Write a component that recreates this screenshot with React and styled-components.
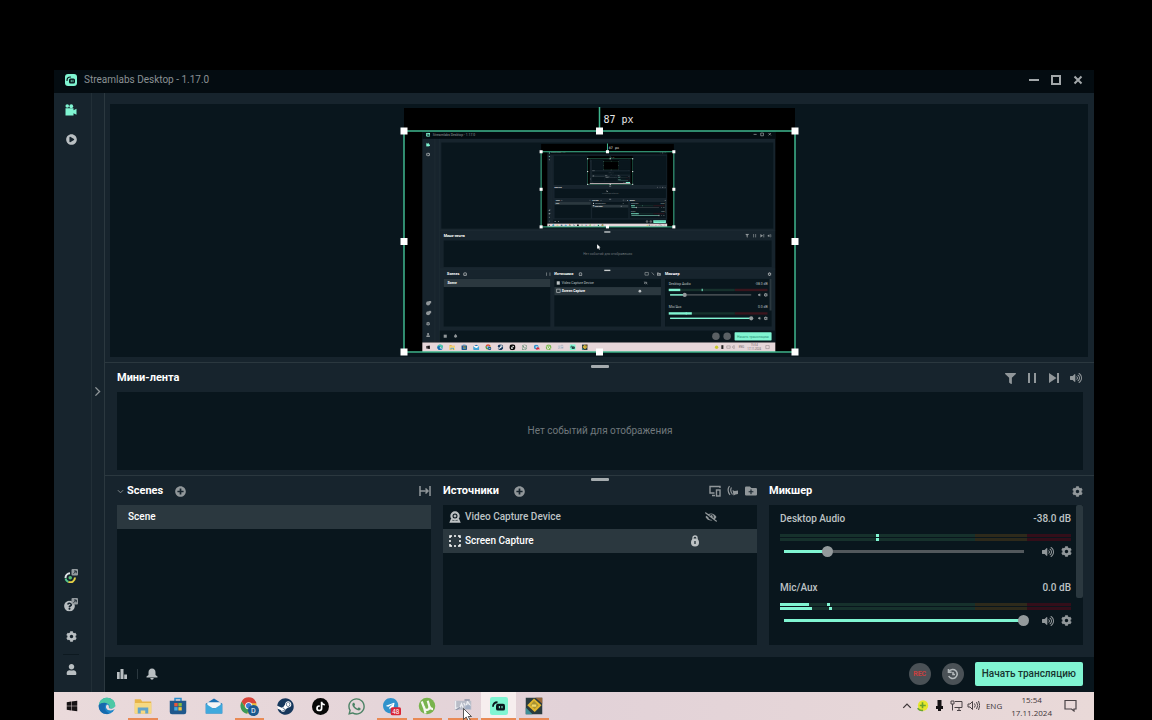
import React from 'react';
import styled, { createGlobalStyle } from 'styled-components';
import {
  FaCog,
  FaUser,
  FaBell,
  FaPlusCircle,
  FaFilter,
  FaVolumeUp,
  FaVolumeDown,
  FaFolderPlus,
  FaEyeSlash,
  FaPlayCircle,
  FaWindows,
  FaSteam,
  FaTiktok,
  FaWhatsapp,
  FaTelegram,
  FaQuestionCircle,
} from 'react-icons/fa';

const colors = {
  accent: '#80f5d2',
  section: '#17242d',
  panel: '#09161d',
  title: '#040c11',
  border: '#2b383f',
  icon: '#91979a',
  line: '#3fb68e',
};

const GlobalStyle = createGlobalStyle`
  * {
    box-sizing: border-box;
  }
  body {
    margin: 0;
    background: #000;
    color: #bdc2c4;
    font-family: Roboto, "Noto Sans", sans-serif;
    font-size: 10px;
    line-height: 14px;
  }
  button {
    display: inline-flex;
    align-items: center;
    justify-content: center;
    border: 0;
    padding: 0;
    background: none;
    color: inherit;
    font: inherit;
    cursor: pointer;
  }
  svg {
    display: block;
    flex: none;
  }
`;

const Page = styled.div`
  display: flex;
  min-height: 100vh;
  padding: 70px 58px 0 54px;
`;

const Window = styled.div`
  flex: 1;
  min-width: 0;
  display: flex;
  flex-direction: column;
  background: ${colors.section};
`;

const TitleBar = styled.header`
  display: flex;
  align-items: center;
  height: 23px;
  padding: 0 9px 3px 11px;
  gap: 7px;
  background: ${colors.title};
  color: #8b9194;
`;

const Title = styled.span`
  flex: 1;
`;

const WindowButton = styled.button`
  width: 15px;
  height: 15px;
  color: #a3a8aa;
`;

const Body = styled.div`
  flex: 1;
  display: flex;
`;

const Nav = styled.nav`
  display: flex;
  flex-direction: column;
  align-items: center;
  width: 38px;
  padding: 7px 3px 13px 0;
  border-right: 1px solid #222f37;
  color: #b9bfc2;
`;

const NavButton = styled.button`
  width: 20px;
  height: 20px;
  margin-bottom: ${(props) => props.$gap || 0}px;
  color: ${(props) => (props.$active ? colors.accent : 'inherit')};
`;

const NavSpacer = styled.div`
  flex: 1;
`;

const NavLine = styled.div`
  width: 16px;
  height: 1px;
  margin: 8px 0 4px;
  background: #0d1920;
`;

const Strip = styled.div`
  display: flex;
  align-items: center;
  justify-content: center;
  width: 13px;
  padding: 0 2px 2px 0;
  border-right: 1px solid ${colors.border};
  color: ${colors.icon};
`;

const Main = styled.main`
  flex: 1;
  min-width: 0;
  display: flex;
  flex-direction: column;
`;

const Stage = styled.section`
  flex: 1;
  display: flex;
  padding: 11px 6px 5px 5px;
`;

const Canvas = styled.div`
  flex: 1;
  display: flex;
  justify-content: center;
  background: ${colors.panel};
`;

const Section = styled.section`
  padding: 2px 11px ${(props) => props.$bottom}px 12px;
  border-top: 1px solid ${colors.border};
`;

const Handle = styled.div`
  width: 18px;
  height: 3px;
  margin: 0 auto;
  border-radius: 1px;
  background: #a5abae;
`;

const PanelHeader = styled.div`
  display: flex;
  align-items: center;
  gap: ${(props) => props.$gap || 0}px;
  height: 20px;
  margin-bottom: 4px;
  color: ${colors.icon};
`;

const Heading = styled.h2`
  margin: 0 0 0 ${(props) => props.$left || 0}px;
  color: #fff;
  font-size: 11px;
  font-weight: 700;
`;

const Push = styled.div`
  flex: 1;
`;

const IconButton = styled.button`
  width: 14px;
  height: 14px;
  margin-left: ${(props) => props.$left || 0}px;
  color: ${(props) => props.$color || 'inherit'};
`;

const Feed = styled.div`
  display: flex;
  align-items: center;
  justify-content: center;
  height: 78px;
  background: ${colors.panel};
  color: #70787c;
`;

const Columns = styled.div`
  display: grid;
  grid-template-columns: repeat(3, minmax(0, 1fr));
  gap: 12px;
`;

const List = styled.ul`
  height: 140px;
  margin: 0;
  padding: 0;
  list-style: none;
  background: ${colors.panel};
`;

const Item = styled.li`
  display: flex;
  align-items: center;
  gap: 4px;
  height: 24px;
  padding: 0 ${(props) => props.$right || 0}px 0 ${(props) => props.$left}px;
  background: ${(props) => (props.$selected ? colors.border : 'transparent')};
  color: ${(props) => (props.$selected ? '#fff' : '#bdc2c4')};
  font-weight: 500;
`;

const Mixer = styled.div`
  display: flex;
  height: 140px;
  overflow: hidden;
  background: ${colors.panel};
`;

const Channels = styled.div`
  flex: 1;
  padding: 7px 5px 0 11px;
`;

const ScrollThumb = styled.div`
  width: 7px;
  height: 93px;
  border-radius: 2px;
  background: ${colors.border};
`;

const Channel = styled.div`
  height: 69px;
`;

const ChannelHead = styled.div`
  display: flex;
  justify-content: space-between;
  margin-bottom: 8px;
  font-weight: 500;
`;

const Meter = styled.div`
  position: relative;
  height: 3px;
  margin-bottom: 1px;
  background: linear-gradient(
    90deg,
    #16312c 0 67%,
    #2e2a1b 67% 85%,
    #330e19 85%
  );
`;

const MeterFill = styled.div`
  height: 3px;
  background: ${colors.accent};
`;

const MeterPeak = styled.div`
  position: absolute;
  top: 0;
  width: 3px;
  height: 3px;
  background: ${colors.accent};
`;

const SliderRow = styled.div`
  display: flex;
  align-items: center;
  gap: 4px;
  height: 11px;
  margin: 5px -2px 0 0;
  color: ${colors.icon};
`;

const Slider = styled.input`
  flex: 1;
  min-width: 0;
  height: 11px;
  margin: 0 8px 0 -1px;
  appearance: none;
  background: linear-gradient(
      90deg,
      ${colors.accent} ${(props) => props.value}%,
      #52585c ${(props) => props.value}%
    )
    center / calc(100% - 10px) 3px no-repeat;
  &::-webkit-slider-thumb {
    appearance: none;
    width: 11px;
    height: 11px;
    border-radius: 50%;
    background: #949a9c;
  }
`;

const Footer = styled.footer`
  display: flex;
  align-items: center;
  height: 35px;
  padding: 0 11px 2px 10px;
  background: ${colors.panel};
  color: #b9bfc2;
`;

const FooterLine = styled.div`
  width: 1px;
  height: 10px;
  margin: 0 7px 0 8px;
  background: ${colors.border};
`;

const RoundButton = styled.button`
  width: 22px;
  height: 22px;
  margin-right: 11px;
  border-radius: 50%;
  background: #4a5156;
  color: ${(props) => props.$color};
  font-size: 7px;
  font-weight: 700;
`;

const GoLive = styled.button`
  height: 24px;
  padding: 0 7px;
  border-radius: 2px;
  background: ${colors.accent};
  color: #17342f;
  font-weight: 500;
`;

const Taskbar = styled.div`
  display: flex;
  align-items: stretch;
  height: 28px;
  background: linear-gradient(90deg, #eadadb, #e2d2d8 50%, #e9d9d8);
  color: #3d3638;
  font-family: "Open Sans", "Noto Sans", sans-serif;
  font-size: 8px;
  line-height: 13px;
`;

const Apps = styled.div`
  display: grid;
  grid-template-columns: repeat(14, 1fr);
  width: 498px;
`;

const AppButton = styled.button`
  position: relative;
  background: ${(props) => (props.$active ? '#f6eeee' : 'none')};
  &::after {
    content: '';
    position: absolute;
    right: ${(props) => (props.$active ? 0 : 3)}px;
    bottom: 0;
    left: ${(props) => (props.$active ? 0 : 3)}px;
    height: 2px;
    background: ${(props) => (props.$open ? '#e98a55' : 'none')};
  }
`;

const Pointer = styled.svg`
  position: absolute;
  z-index: 1;
  top: 16px;
  left: 18px;
`;

const Tray = styled.div`
  display: flex;
  align-items: center;
  margin-left: auto;
  padding: 0 17px 1px 0;
  gap: 4px;
`;

const Language = styled.span`
  margin-left: 2px;
`;

const Clock = styled.time`
  margin: 0 8px 0 5px;
  text-align: center;
`;

/* ---------- icons ---------- */

const Logo = ({ size = 12, ...rest }) => (
  <svg width={size} height={size} viewBox="0 0 24 24" {...rest}>
    <rect width="24" height="24" rx="6" fill={colors.accent} />
    <rect x="8" y="9" width="12" height="10" rx="3" fill="#09161d" />
    <path d="M4 13q0-7 7-7" fill="none" stroke="#09161d" strokeWidth="2.4" strokeLinecap="round" />
    <path d="M12.5 12.500v3M16 12.500v3" stroke={colors.accent} strokeWidth="1.600" strokeLinecap="round" />
  </svg>
);

const Camera = (props) => (
  <svg width="12" height="12" viewBox="0 0 24 24" fill="currentColor" {...props}>
    <circle cx="4.500" cy="4" r="3.600" />
    <circle cx="12.500" cy="4.500" r="3.800" />
    <path d="M1 8.500h16v4l6-3v12l-6-3v4.500H1z" />
  </svg>
);

const External = () => (
  <g>
    <rect x="15" y="0" width="13" height="13" rx="2" fill="#949b9f" />
    <path d="M19 9.500l5-5M20 4h4.500v4.500" fill="none" stroke="#17242d" strokeWidth="1.800" />
  </g>
);

const Gauge = () => (
  <svg width="14" height="14" viewBox="0 0 28 28">
    <path d="M3 18a9.500 9.500 0 0 1 9-9.500" fill="none" stroke="#dfe4e6" strokeWidth="4" />
    <path d="M3 19a9.500 9.500 0 0 0 6 7" fill="none" stroke="#55c98c" strokeWidth="4" />
    <path d="M9 26a9.500 9.500 0 0 0 13-9" fill="none" stroke="#e2cf45" strokeWidth="4" />
    <circle cx="12.500" cy="17.500" r="3.600" fill="#52bd74" />
    <External />
  </svg>
);

const Help = () => (
  <svg width="14" height="14" viewBox="0 0 28 28">
    <FaQuestionCircle x="0" y="5" size={22} color="#b9bfc2" />
    <External />
  </svg>
);

const Chevron = ({ d, size = 10, width = 2 }) => (
  <svg width={size} height={size} viewBox="0 0 16 16" fill="none" stroke="currentColor" strokeWidth={width}>
    <path d={d} />
  </svg>
);

const Pause = () => (
  <svg width="10" height="12" viewBox="0 0 10 12" fill="currentColor">
    <path d="M1 1h2v10H1zM7 1h2v10H7z" />
  </svg>
);

const Next = () => (
  <svg width="12" height="12" viewBox="0 0 12 12" fill="currentColor">
    <path d="M1 1l7.500 5L1 11zM9 1h2v10H9z" />
  </svg>
);

const Collapse = () => (
  <svg width="12" height="12" viewBox="0 0 12 12" fill="none" stroke="currentColor" strokeWidth="1.500">
    <path d="M1 1v10M11 1v10M1.500 6H9M6.500 3.500L9 6 6.500 8.500" />
  </svg>
);

const Screens = () => (
  <svg width="12" height="12" viewBox="0 0 12 12" fill="none" stroke="currentColor" strokeWidth="1.400">
    <path d="M11 3V1.500H1v6.500h4.500M3 10.500h3" />
    <rect x="7.500" y="5" width="3.500" height="6" />
  </svg>
);

const Audio = () => (
  <svg width="12" height="12" viewBox="0 0 24 24" fill="none" stroke="currentColor" strokeWidth="2.400">
    <path d="M5 2Q-1 10 6 20M9 5q-4 6 2 14" />
    <path d="M11 10l4 2 7-1v7l-5 1-4 2z" fill="currentColor" stroke="none" />
  </svg>
);

const Webcam = () => (
  <svg width="12" height="12" viewBox="0 0 12 12" fill="none" stroke="currentColor">
    <circle cx="6" cy="5" r="3.600" strokeWidth="2.200" />
    <circle cx="6" cy="5" r="1" fill="currentColor" />
    <path d="M3 8L1.800 10.800h8.400L9 8" strokeWidth="2" />
  </svg>
);

const Region = () => (
  <svg width="12" height="12" viewBox="0 0 12 12" fill="none" stroke="currentColor" strokeWidth="1.500">
    <path d="M1 3V1h2M9 1h2v2M11 9v2H9M3 11H1V9M5 1h2M5 11h2M1 5v2M11 5v2" />
  </svg>
);

const Lock = () => (
  <svg width="10" height="12" viewBox="0 0 10 12">
    <path d="M3 5V3a2 2 0 0 1 4 0v2" fill="none" stroke="currentColor" strokeWidth="1.400" />
    <circle cx="5" cy="7.500" r="4" fill="currentColor" />
    <path d="M5 6v3" stroke="#2b383f" strokeWidth="1.400" />
  </svg>
);

const Bars = () => (
  <svg width="12" height="12" viewBox="0 0 12 12" fill="currentColor">
    <path d="M1 4h2.700v7H1zM4.500 1h3v10h-3zM8.200 6.500H11V11H8.200z" />
  </svg>
);

const Bell = () => (
  <svg width="12" height="12" viewBox="0 0 12 12" fill="currentColor">
    <path d="M6 0.500q3.500.3 3.500 4v2.500l2 1.500v1H.5v-1l2-1.500V4.500q0-3.700 3.500-4zM4.200 10h3.600q-.3 1.700-1.800 1.700T4.200 10z" />
  </svg>
);

const Replay = () => (
  <svg width="12" height="12" viewBox="0 0 12 12" fill="none" stroke="currentColor" strokeWidth="1.600">
    <path d="M2 3.500a4.500 4.500 0 1 1-.3 4.500" />
    <path d="M1.500 1v3.200h3.200M6 4V6.500h2" />
  </svg>
);

const Edge = (props) => (
  <svg width="18" height="18" viewBox="0 0 24 24" {...props}>
    <circle cx="12" cy="12" r="11" fill="#1d86c9" />
    <path d="M1 11C2 4 7 1 12 1c7 0 11 5 11 10 0 4-4 5-7 4-2-1 0-2-1-4-2-4-10-4-14 0z" fill="#4cc8a5" />
    <path d="M1 11c3-4 9-4 11-2-4 1-5 9 3 13C7 25 0 18 1 11z" fill="#1769ad" />
    <path d="M12 10c-3 3-1 8 5 8 2 0 4-1 5-2l1 1V12c-2 4-6 4-8 3-1-1 0-2-1-4z" fill="#eadadb" />
  </svg>
);

const Explorer = (props) => (
  <svg width="18" height="18" viewBox="0 0 24 24" {...props}>
    <path d="M1 3h8l2 3h12v16H1z" fill="#e7b549" />
    <path d="M1 8h22v14H1z" fill="#f6d982" />
    <path d="M5 14h14v8h-4v-4H9v4H5z" fill="#62a4ca" />
  </svg>
);

const Store = (props) => (
  <svg width="18" height="18" viewBox="0 0 24 24" {...props}>
    <path d="M8 6V2h8v4" fill="none" stroke="#2b8fcd" strokeWidth="2" />
    <path d="M1 5h22v15q0 3-3 3H4q-3 0-3-3z" fill="#20588c" />
    <path d="M7 8h4.500v4.500H7z" fill="#e8583a" />
    <path d="M12.500 8H17v4.500h-4.500z" fill="#84bb3c" />
    <path d="M7 13.500h4.500V18H7z" fill="#42a8e0" />
    <path d="M12.500 13.500H17V18h-4.500z" fill="#f0c23c" />
  </svg>
);

const Mail = (props) => (
  <svg width="18" height="18" viewBox="0 0 24 24" {...props}>
    <path d="M1 9l11-7 11 7v13H1z" fill="#1b72b4" />
    <path d="M3 7h18v8H3z" fill="#f5f5f5" />
    <path d="M1 9l11 7 11-7v13H1z" fill="#3fa9dd" />
  </svg>
);

const Chrome = (props) => (
  <svg width="19" height="19" viewBox="0 0 24 24" {...props}>
    <circle cx="11" cy="11" r="10" fill="#e8bd3b" />
    <path d="M2 6a10 10 0 0 1 18 0l.8 2H11l-4 5z" fill="#d8443a" />
    <path d="M2 6l5 8 4 2-2 5A10 10 0 0 1 2 6z" fill="#3d9a56" />
    <circle cx="11" cy="11" r="4.500" fill="#fff" />
    <circle cx="11" cy="11" r="3.400" fill="#3c78d0" />
    <circle cx="17" cy="17" r="7" fill="#1c5a8f" />
    <text x="17" y="20.500" fill="#fff" fontSize="9" fontFamily="Roboto, sans-serif" textAnchor="middle">D</text>
  </svg>
);

const WindowsIcon = (props) => (
  <svg width="18" height="18" viewBox="0 0 24 24" {...props}>
    <FaWindows x="4" y="4" size={16} color="#161214" />
  </svg>
);

const Steam = (props) => (
  <svg width="17" height="17" viewBox="0 0 24 24" {...props}>
    <circle cx="12" cy="12" r="11" fill="#fff" />
    <FaSteam x="0" y="0" size={24} color="#16375c" />
  </svg>
);

const Tiktok = (props) => (
  <svg width="17" height="17" viewBox="0 0 24 24" {...props}>
    <circle cx="12" cy="12" r="12" fill="#080808" />
    <FaTiktok x="5" y="5" size={14} color="#fff" />
  </svg>
);

const Whatsapp = (props) => (
  <svg width="19" height="19" viewBox="0 0 24 24" {...props}>
    <FaWhatsapp x="0" y="0" size={24} color="#4b8265" />
  </svg>
);

const Telegram = (props) => (
  <svg width="19" height="19" viewBox="0 0 24 24" {...props}>
    <circle cx="11" cy="11" r="9" fill="#fff" />
    <FaTelegram x="1" y="1" size={20} color="#3193cc" />
    <rect x="11" y="13" width="13" height="10" rx="2" fill="#d92638" />
    <text x="17.500" y="21" fill="#fff" fontSize="8" fontFamily="Roboto, sans-serif" textAnchor="middle">48</text>
  </svg>
);

const Torrent = (props) => (
  <svg width="18" height="18" viewBox="0 0 24 24" {...props}>
    <circle cx="12" cy="12" r="11" fill="#78b34d" />
    <path d="M5 6l3 8q1 4 5 3 3-1 2-5l-2-7M15 12q1 4 5 4M8 13l2 9" fill="none" stroke="#f4f7ee" strokeWidth="3" />
  </svg>
);

const Editor = (props) => (
  <svg width="18" height="18" viewBox="0 0 24 24" {...props}>
    <path d="M1 5h22v12H1z" fill="#b9bdc8" />
    <path d="M2 5v10h5M8 14l2-5 2 5M13 8l3 5 2-7 4 6" fill="none" stroke="#eceef2" strokeWidth="1.800" />
    <path d="M3 17l5-3M14 4h7" fill="none" stroke="#8b93a6" strokeWidth="1.800" />
    <path d="M15 11h7v5h-7z" fill="#a2afc4" />
  </svg>
);

const StreamApp = (props) => (
  <svg width="18" height="18" viewBox="0 0 24 24" {...props}>
    <rect width="24" height="24" rx="3" fill={colors.accent} />
    <rect x="8" y="9" width="12" height="9" rx="2.500" fill="#09161d" />
    <path d="M4 13q0-6 6-6" fill="none" stroke="#09161d" strokeWidth="2.400" />
    <path d="M12.500 12v3M16 12v3" stroke={colors.accent} strokeWidth="1.400" />
  </svg>
);

const Diamond = (props) => (
  <svg width="18" height="18" viewBox="0 0 24 24" {...props}>
    <rect x="1" y="1" width="22" height="22" fill="#2a3c40" />
    <path d="M1 14l9 9H1z" fill="#3f8f95" />
    <path d="M14 1h9v8z" fill="#96683a" />
    <path d="M12 2l10 9-9 9-10-9z" fill="#e2b62f" />
    <path d="M12 5l6 6-5 5-6-5z" fill="#a79232" />
    <path d="M9 10h6v3H9z" fill="#f0d96b" />
  </svg>
);

const apps = [
  { name: 'Windows', Icon: WindowsIcon },
  { name: 'Edge', Icon: Edge },
  { name: 'Explorer', Icon: Explorer, open: true },
  { name: 'Store', Icon: Store },
  { name: 'Mail', Icon: Mail },
  { name: 'Chrome', Icon: Chrome, open: true },
  { name: 'Steam', Icon: Steam },
  { name: 'TikTok', Icon: Tiktok },
  { name: 'WhatsApp', Icon: Whatsapp },
  { name: 'Telegram', Icon: Telegram, open: true },
  { name: 'uTorrent', Icon: Torrent, open: true },
  { name: 'Editor', Icon: Editor, open: true, hover: true },
  { name: 'Streamlabs', Icon: StreamApp, open: true, active: true },
  { name: 'Diamond', Icon: Diamond, open: true },
];

/* ---------- captured screen, drawn inside itself ---------- */

const Selection = ({ x, y, w, h, stroke = 1.5, handle = 7, label = true }) => (
  <g>
    <rect x={x} y={y} width={w} height={h} fill="none" stroke={colors.line} strokeWidth={stroke} />
    <path d={`M${x + w / 2} ${y}v-24`} stroke={colors.line} strokeWidth={stroke} />
    {label && (
      <text x={x + w / 2 + 4} y={y - 8} fill="#e8e8e8" fontSize="10" fontFamily="DejaVu Sans Mono, monospace">
        87 px
      </text>
    )}
    {[0, 0.5, 1].map((i) =>
      [0, 0.5, 1].map((j) =>
        i === 0.5 && j === 0.5 ? null : (
          <rect
            key={`${i}${j}`}
            x={x + w * i - handle / 2}
            y={y + h * j - handle / 2}
            width={handle}
            height={handle}
            fill="#fff"
          />
        )
      )
    )}
  </g>
);

const MiniTexts = () => (
  <g fill="#bdc2c4">
    <text x="85" y="84" fill={colors.icon}>Streamlabs Desktop - 1.17.0</text>
    <g fill="#fff" fontWeight="700">
      <g fontSize="11">
        <text x="117" y="382">Мини-лента</text>
        <text x="127" y="495">Scenes</text>
        <text x="443" y="495">Источники</text>
        <text x="769" y="495">Микшер</text>
      </g>
      <text x="128" y="521">Scene</text>
      <text x="465" y="544">Screen Capture</text>
    </g>
    <text x="465" y="521">Video Capture Device</text>
    <text x="600" y="435" textAnchor="middle" fill="#70787c">Нет событий для отображения</text>
    <text x="780" y="523">Desktop Audio</text>
    <text x="1071" y="523" textAnchor="end">-38.0 dB</text>
    <text x="780" y="592">Mic/Aux</text>
    <text x="1071" y="592" textAnchor="end">0.0 dB</text>
    <text x="1028" y="678" textAnchor="middle" fill="#2b8f75">Начать трансляцию</text>
  </g>
);

// at the deepest level words are only a pixel or two long
const MiniStrokes = () => (
  <g fill="#c4c9cb">
    <rect x="117" y="374" width="65" height="8" />
    <rect x="127" y="487" width="38" height="8" />
    <rect x="443" y="487" width="59" height="8" />
    <rect x="769" y="487" width="45" height="8" />
    <rect x="128" y="513" width="28" height="7" />
    <rect x="465" y="513" width="97" height="7" opacity=".6" />
    <rect x="465" y="536" width="69" height="7" />
    <rect x="780" y="515" width="65" height="7" opacity=".6" />
    <rect x="1034" y="515" width="37" height="7" opacity=".6" />
    <rect x="780" y="584" width="38" height="7" opacity=".6" />
    <rect x="527" y="427" width="146" height="7" opacity=".3" />
  </g>
);

const MiniChannel = ({ y, level, peak, value }) => (
  <g>
    <rect x="780" y={y + 15} width="195" height="7" fill="#16312c" />
    <rect x="975" y={y + 15} width="96" height="7" fill="#3a151d" />
    <rect x="780" y={y + 15} width={level} height="7" fill={colors.accent} />
    <rect x={peak} y={y + 15} width="3" height="7" fill={colors.accent} />
    <rect x="784" y={y + 31} width="239" height="4" fill="#52585c" />
    <rect x="784" y={y + 31} width={239 * value} height="4" fill={colors.accent} />
    <circle cx={784 + 239 * value} cy={y + 33} r="6" fill="#949a9c" />
    <FaVolumeDown x="1042" y={y + 27} size={12} />
    <FaCog x="1060" y={y + 27} size={12} />
  </g>
);

const Capture = ({ depth, x, y, width, height }) => (
  <svg x={x} y={y} width={width} height={height} viewBox="0 70 1152 650" preserveAspectRatio="none">
    <rect y="70" width="1152" height="650" fill="#000" />
    <rect x="54" y="70" width="1040" height="622" fill={colors.section} />
    <rect x="54" y="70" width="1040" height="23" fill={colors.title} />
    <rect x="110" y="104" width="978" height="253" fill={colors.panel} />
    <rect x="117" y="392" width="966" height="78" fill={colors.panel} />
    <rect x="117" y="505" width="314" height="140" fill={colors.panel} />
    <rect x="443" y="505" width="314" height="140" fill={colors.panel} />
    <rect x="769" y="505" width="314" height="140" fill={colors.panel} />
    <rect x="105" y="657" width="989" height="35" fill={colors.panel} />
    <rect x="117" y="505" width="314" height="24" fill={colors.border} />
    <rect x="443" y="529" width="314" height="24" fill={colors.border} />
    <rect x="1077" y="505" width="6" height="93" fill={colors.border} />
    <path d="M105 362h989M105 476h989M91 93v599M104 93v599" stroke={colors.border} />
    <rect x="590" y="365" width="18" height="4" fill="#c8cccd" />
    <rect x="590" y="478" width="18" height="4" fill="#c8cccd" />
    <g fontFamily="Roboto, sans-serif" fontSize="10" color={colors.icon} fill={colors.icon}>
      <Logo x="65" y="75" />
      <Camera x="65" y="104" color={colors.accent} />
      <FaPlayCircle x="65" y="133" size={12} />
      <path d="M1030 80h9M1051 76h8v8h-8zM1074 76l7 7M1081 76l-7 7" fill="none" stroke="#a3a8aa" strokeWidth="2" />
      <FaFilter x="1005" y="372" size={12} />
      <path d="M1030 373v10M1036 373v10M1060 373v10" stroke="currentColor" strokeWidth="2" />
      <path d="M1050 373l8 5-8 5z" />
      <FaVolumeUp x="1071" y="372" size={12} />
      <FaPlusCircle x="174" y="485" size={12} />
      <FaPlusCircle x="514" y="485" size={12} />
      <FaFolderPlus x="745" y="485" size={12} />
      <path d="M710 486h10v8h-10zM730 486l7 8M420 486v10M430 486v10" fill="none" stroke="currentColor" strokeWidth="2" />
      <FaCog x="1071" y="485" size={12} />
      <FaEyeSlash x="706" y="511" size={12} />
      <rect x="450" y="512" width="9" height="10" fill="#bdc2c4" />
      <rect x="450" y="535" width="10" height="10" fill="none" stroke="#bdc2c4" strokeWidth="2" />
      <circle cx="695" cy="541" r="4" fill="#bdc2c4" />
      <MiniChannel y={519} level={34} peak={877} value={0.18} />
      <MiniChannel y={588} level={68} peak={830} value={1} />
      <circle cx="71" cy="577" r="6" />
      <circle cx="71" cy="606" r="6" />
      <rect x="73" y="570" width="7" height="7" />
      <rect x="73" y="599" width="7" height="7" />
      <FaCog x="65" y="631" size={12} />
      <FaUser x="65" y="664" size={12} />
      <rect x="117" y="669" width="9" height="9" />
      <FaBell x="146" y="667" size={12} />
      <circle cx="919" cy="674" r="11" fill="#5a6064" />
      <circle cx="952" cy="674" r="11" fill="#5a6064" />
      <rect x="974" y="662" width="109" height="24" rx="2" fill={colors.accent} />
      {depth > 1 ? <MiniTexts /> : <MiniStrokes />}
    </g>
    <rect x="54" y="692" width="1040" height="28" fill="#e6d6d9" />
    {depth > 1 && (
      <g fontFamily="Open Sans, sans-serif" fontSize="8" fill="#5c5356">
        {apps.map(({ name, Icon }, index) => (
          <Icon key={name} x={62 + index * 35.5} y="697" width="18" height="18" />
        ))}
        <circle cx="921" cy="706" r="5" fill="#c9c832" />
        <rect x="935" y="700" width="6" height="11" fill="#222" />
        <path d="M951 702h10v7h-10zM968 704l5-3v9l-5-3z" fill="none" stroke="#5c5356" />
        <text x="986" y="709">ENG</text>
        <text x="1032" y="702" textAnchor="middle">15:54</text>
        <text x="1032" y="715" textAnchor="middle">17.11.2024</text>
        <path d="M1066 701h10v9h-10z" fill="none" stroke="#5c5356" />
      </g>
    )}
    <rect x="404" y="108" width="391" height="245" fill="#000" />
    {depth > 1 && <Capture depth={depth - 1} x={404} y={131} width={391} height={221} />}
    <Selection x={404} y={131} w={391} h={221} stroke={3} handle={9} label={depth > 1} />
    <path d="M569 403v14l3-3 3 5 2-1-2-5h4z" fill="#fff" />
  </svg>
);

const Preview = () => (
  <svg width="401" height="253" viewBox="399 104 401 253" role="img" aria-label="Preview">
    <rect x="404" y="108" width="391" height="245" fill="#000" />
    <Capture depth={3} x={404} y={131} width={391} height={221} />
    <Selection x={404} y={131} w={391} h={221} />
  </svg>
);

/* ---------- mixer ---------- */

const MixerChannel = ({ name, db, levels, peaks, value }) => {
  const [volume, setVolume] = React.useState(value);
  return (
    <Channel>
      <ChannelHead>
        <label htmlFor={name}>{name}</label>
        <span>{db}</span>
      </ChannelHead>
      {levels.map((level, index) => (
        <Meter key={index}>
          <MeterFill style={{ width: `${level}%` }} />
          <MeterPeak style={{ left: `${peaks[index]}%` }} />
        </Meter>
      ))}
      <SliderRow>
        <Slider
          id={name}
          type="range"
          min="0"
          max="100"
          value={volume}
          onChange={(e) => setVolume(e.target.value)}
        />
        <IconButton aria-label="Mute">
          <FaVolumeUp size={12} />
        </IconButton>
        <IconButton aria-label="Settings">
          <FaCog size={11} />
        </IconButton>
      </SliderRow>
    </Channel>
  );
};

const App = () => {
  return (
    <>
      <GlobalStyle />
      <Page>
        <Window>
          <TitleBar>
            <Logo />
            <Title>Streamlabs Desktop - 1.17.0</Title>
            <WindowButton aria-label="Minimize">
              <svg width="10" height="10" viewBox="0 0 10 10" fill="currentColor">
                <path d="M0 4h10v2H0z" />
              </svg>
            </WindowButton>
            <WindowButton aria-label="Maximize">
              <svg width="10" height="10" viewBox="0 0 10 10" fill="none" stroke="currentColor" strokeWidth="2">
                <path d="M1 1h8v8H1z" />
              </svg>
            </WindowButton>
            <WindowButton aria-label="Close">
              <svg width="10" height="10" viewBox="0 0 10 10" fill="none" stroke="currentColor" strokeWidth="2">
                <path d="M1.500 1.500l7 7M8.500 1.500l-7 7" />
              </svg>
            </WindowButton>
          </TitleBar>
          <Body>
            <Nav>
              <NavButton $active $gap={9} aria-label="Editor">
                <Camera />
              </NavButton>
              <NavButton aria-label="Highlighter">
                <FaPlayCircle size={11} />
              </NavButton>
              <NavSpacer />
              <NavButton $gap={9} aria-label="Dashboard">
                <Gauge />
              </NavButton>
              <NavButton $gap={11} aria-label="Help">
                <Help />
              </NavButton>
              <NavButton aria-label="Settings">
                <FaCog size={11} />
              </NavButton>
              <NavLine />
              <NavButton aria-label="Account">
                <FaUser size={11} />
              </NavButton>
            </Nav>
            <Strip>
              <Chevron d="M5 2l6 6-6 6" size={11} />
            </Strip>
            <Main>
              <Stage>
                <Canvas>
                  <Preview />
                </Canvas>
              </Stage>

              <Section $bottom={5}>
                <Handle />
                <PanelHeader $gap={8}>
                  <Heading>Мини-лента</Heading>
                  <Push />
                  <IconButton aria-label="Filter">
                    <FaFilter size={11} />
                  </IconButton>
                  <IconButton aria-label="Pause">
                    <Pause />
                  </IconButton>
                  <IconButton aria-label="Skip">
                    <Next />
                  </IconButton>
                  <IconButton aria-label="Volume">
                    <FaVolumeUp size={12} />
                  </IconButton>
                </PanelHeader>
                <Feed>Нет событий для отображения</Feed>
              </Section>

              <Section $bottom={12}>
                <Handle />
                <Columns>
                  <div>
                    <PanelHeader>
                      <Chevron d="M2 5l6 6 6-6" size={7} />
                      <Heading $left={3}>Scenes</Heading>
                      <IconButton $left={10} aria-label="Add scene">
                        <FaPlusCircle size={11} />
                      </IconButton>
                      <Push />
                      <Collapse />
                    </PanelHeader>
                    <List>
                      <Item $selected $left={11}>Scene</Item>
                    </List>
                  </div>
                  <div>
                    <PanelHeader $gap={6}>
                      <Heading>Источники</Heading>
                      <IconButton $left={7} aria-label="Add source">
                        <FaPlusCircle size={11} />
                      </IconButton>
                      <Push />
                      <Screens />
                      <Audio />
                      <FaFolderPlus size={12} />
                    </PanelHeader>
                    <List>
                      <Item $left={6} $right={39}>
                        <Webcam />
                        Video Capture Device
                        <Push />
                        <IconButton $color={colors.icon} aria-label="Show">
                          <FaEyeSlash size={12} />
                        </IconButton>
                      </Item>
                      <Item $selected $left={6} $right={55}>
                        <Region />
                        Screen Capture
                        <Push />
                        <IconButton $color="#bdc2c4" aria-label="Unlock">
                          <Lock />
                        </IconButton>
                      </Item>
                    </List>
                  </div>
                  <div>
                    <PanelHeader>
                      <Heading>Микшер</Heading>
                      <Push />
                      <FaCog size={11} />
                    </PanelHeader>
                    <Mixer>
                      <Channels>
                        <MixerChannel name="Desktop Audio" db="-38.0 dB" levels={[0, 0]} peaks={[33, 33]} value={18} />
                        <MixerChannel name="Mic/Aux" db="0.0 dB" levels={[10, 11]} peaks={[16, 17]} value={100} />
                      </Channels>
                      <ScrollThumb />
                    </Mixer>
                  </div>
                </Columns>
              </Section>

              <Footer>
                <IconButton aria-label="Stats">
                  <Bars />
                </IconButton>
                <FooterLine />
                <IconButton aria-label="Notifications">
                  <Bell />
                </IconButton>
                <Push />
                <RoundButton $color="#c9403f">REC</RoundButton>
                <RoundButton $color="#b4babc" aria-label="Replay">
                  <Replay />
                </RoundButton>
                <GoLive>Начать трансляцию</GoLive>
              </Footer>
            </Main>
          </Body>

          <Taskbar>
            <Apps>
              {apps.map(({ name, Icon, open, active, hover }) => (
                <AppButton key={name} $open={open} $active={active} aria-label={name}>
                  <Icon />
                  {hover && (
                    <Pointer width="9" height="13" viewBox="0 0 9 13">
                      <path d="M.5.5v11l2.700-2.500 2 4 2-1-2-3.500h3.300z" fill="#fff" stroke="#333" strokeWidth=".8" />
                    </Pointer>
                  )}
                </AppButton>
              ))}
            </Apps>
            <Tray>
              <Chevron d="M2 11l6-6 6 6" size={10} />
              <svg width="13" height="13" viewBox="0 0 24 24">
                <circle cx="13" cy="12" r="9.500" fill="#e6e62c" />
                <path d="M3 17q4 5 10 4M12 6v11M7 12h11" fill="none" stroke="#6aa52d" strokeWidth="3" />
              </svg>
              <svg width="13" height="13" viewBox="0 0 13 13">
                <path d="M4.500 1h4v7h-4zM3 7h7v3H8v2H5v-2H3z" fill="#141113" />
              </svg>
              <svg width="13" height="13" viewBox="0 0 13 13" fill="none" stroke="#4a4346">
                <path d="M1 2h3v3H1zM2.500 5v6.500M5 2.500h7v6H4.500M7 11.500h4M9 8.500v3" />
              </svg>
              <svg width="13" height="13" viewBox="0 0 13 13" fill="none" stroke="#4a4346">
                <path d="M1 5h2l2.500-2.500v8L3 8H1zM7.500 4.500q1.500 2 0 4M9.500 3q2.500 3.500 0 7M11.500 2q2.500 4.500 0 9" />
              </svg>
              <Language>ENG</Language>
              <Clock>
                15:54
                <br />
                17.11.2024
              </Clock>
              <svg width="13" height="13" viewBox="0 0 13 13" fill="none" stroke="#4a4346" strokeWidth="1.200">
                <path d="M1 1.500h11v8.500H10V12L7.500 10H1z" />
              </svg>
            </Tray>
          </Taskbar>
        </Window>
      </Page>
    </>
  );
};

export default App;
